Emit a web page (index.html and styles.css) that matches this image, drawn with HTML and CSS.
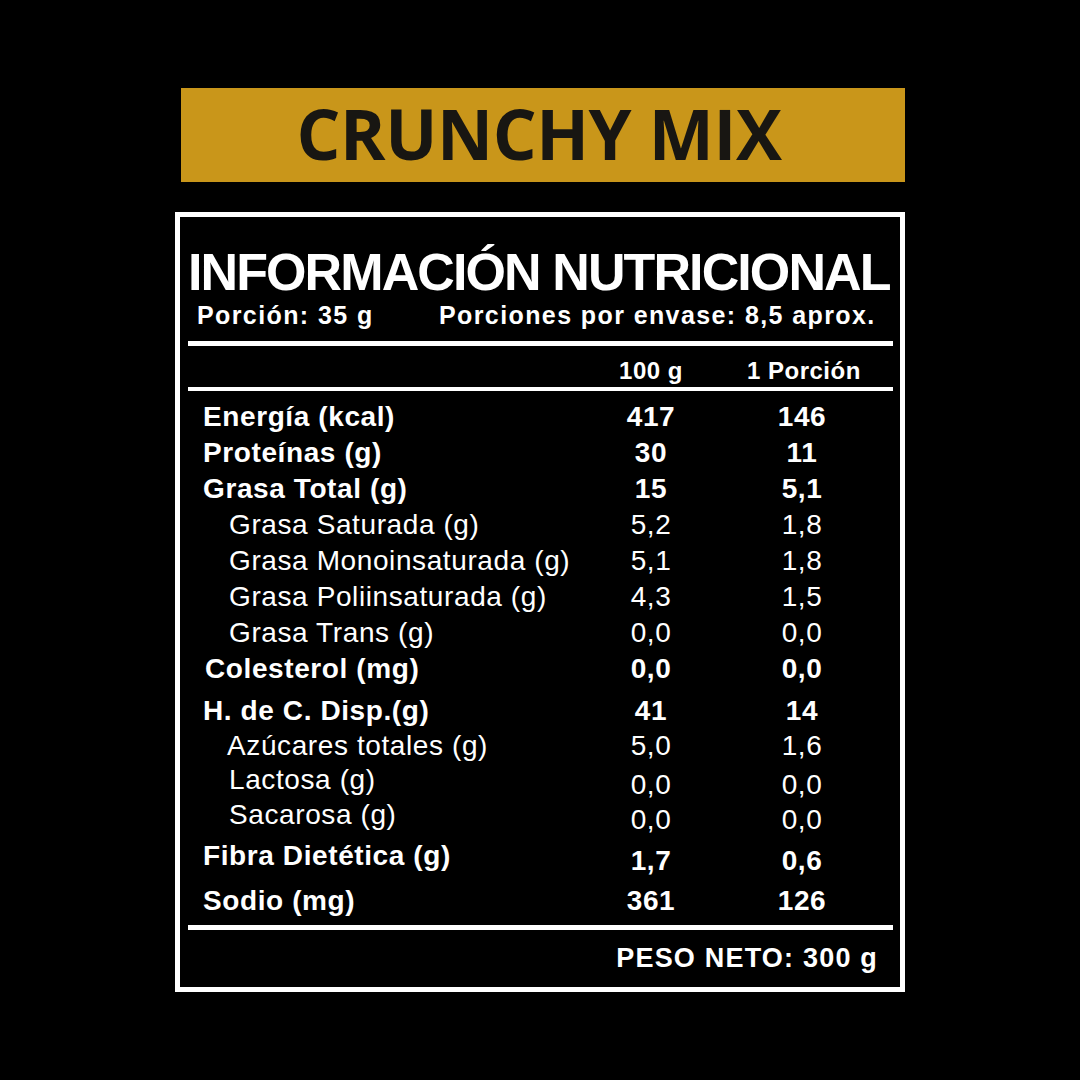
FILE: index.html
```html
<!DOCTYPE html>
<html lang="es">
<head>
<meta charset="utf-8">
<title>Crunchy Mix - Información Nutricional</title>
<link rel="stylesheet" href="styles.css">
</head>
<body>
<div class="page">
  <div class="banner"><h1 class="brand">CRUNCHY MIX</h1></div>
  <section class="label">
    <h2 class="title">INFORMACIÓN NUTRICIONAL</h2>
    <div class="serving"><span class="serving-size">Porción: 35 g</span><span>Porciones por envase: 8,5 aprox.</span></div>
    <div class="rule thick"></div>
    <div class="row head"><span></span><span class="val">100 g</span><span class="val">1 Porción</span></div>
    <div class="rule thin"></div>
    <div class="rows">
      <div class="row main"><span class="name">Energía (kcal)</span><span class="val">417</span><span class="val">146</span></div>
      <div class="row main"><span class="name">Proteínas (g)</span><span class="val">30</span><span class="val">11</span></div>
      <div class="row main"><span class="name">Grasa Total (g)</span><span class="val">15</span><span class="val">5,1</span></div>
      <div class="row sub"><span class="name">Grasa Saturada (g)</span><span class="val">5,2</span><span class="val">1,8</span></div>
      <div class="row sub"><span class="name">Grasa Monoinsaturada (g)</span><span class="val">5,1</span><span class="val">1,8</span></div>
      <div class="row sub"><span class="name">Grasa Poliinsaturada (g)</span><span class="val">4,3</span><span class="val">1,5</span></div>
      <div class="row sub"><span class="name">Grasa Trans (g)</span><span class="val">0,0</span><span class="val">0,0</span></div>
      <div class="row main"><span class="name nudge">Colesterol (mg)</span><span class="val">0,0</span><span class="val">0,0</span></div>
      <div class="row main sp-hc"><span class="name">H. de C. Disp.(g)</span><span class="val">41</span><span class="val">14</span></div>
      <div class="row sub sp-az"><span class="name tight">Azúcares totales (g)</span><span class="val">5,0</span><span class="val">1,6</span></div>
      <div class="row sub sp-la drop"><span class="name">Lactosa (g)</span><span class="val">0,0</span><span class="val">0,0</span></div>
      <div class="row sub sp-sa drop"><span class="name">Sacarosa (g)</span><span class="val">0,0</span><span class="val">0,0</span></div>
      <div class="row main sp-fi drop"><span class="name">Fibra Dietética (g)</span><span class="val">1,7</span><span class="val">0,6</span></div>
      <div class="row main sp-so"><span class="name">Sodio (mg)</span><span class="val">361</span><span class="val">126</span></div>
    </div>
    <div class="rule thick bottom"></div>
    <div class="net">PESO NETO: 300 g</div>
  </section>
</div>
</body>
</html>
```
FILE: styles.css
```css
* { box-sizing: border-box; }
html, body { margin: 0; padding: 0; background: #000; }
.page {
  width: 1080px;
  height: 1080px;
  background: #000;
  display: flex;
  flex-direction: column;
  align-items: flex-start;
  padding-top: 88px;
  font-family: "Liberation Sans", Arial, sans-serif;
  color: #fff;
}
.banner {
  margin-left: 181px;
  width: 724px;
  height: 94px;
  background: #c9961a;
  display: flex;
  align-items: center;
  justify-content: center;
  padding-right: 8px;
  padding-bottom: 4px;
}
.brand {
  margin: 0;
  font-family: "Open Sans", "Noto Sans", sans-serif;
  font-weight: 700;
  font-size: 69px;
  line-height: 70px;
  color: #181612;
  letter-spacing: -0.4px;
}
.label {
  margin-left: 175px;
  margin-top: 30px;
  width: 730px;
  border: 5px solid #fff;
  padding: 29px 7px 16px 8px;
}
.title {
  margin: 0;
  font-size: 52px;
  line-height: 52px;
  font-weight: 700;
  letter-spacing: -1.9px;
  white-space: nowrap;
}
.serving {
  margin-top: 6px;
  display: flex;
  padding-left: 9px;
  font-size: 25px;
  line-height: 23px;
  font-weight: 700;
  letter-spacing: 1.4px;
  white-space: nowrap;
}
.serving-size { width: 242px; }
.rule { background: #fff; }
.thick { height: 5px; margin-top: 14px; }
.thin { height: 4px; margin-top: 5px; }
.bottom { margin-top: 6px; }
.row {
  display: grid;
  grid-template-columns: minmax(0, 1fr) 110px 110px;
  column-gap: 41px;
  padding-right: 36px;
  white-space: nowrap;
}
.row .val { text-align: center; }
.head {
  margin-top: 13px;
  font-size: 24px;
  line-height: 23px;
  font-weight: 700;
  letter-spacing: 0.5px;
}
.rows { margin-top: 8px; }
.rows .row {
  font-size: 28px;
  line-height: 36px;
  letter-spacing: 0.6px;
}
.main { font-weight: 700; }
.sub { font-weight: 400; }
.main .name { padding-left: 15px; }
.sub .name { padding-left: 41px; }
.main .name.nudge { padding-left: 17px; }
.sub .name.tight { padding-left: 39px; }
.sp-hc { margin-top: 6px; }
.sp-az { margin-top: -1px; }
.sp-la { margin-top: -2px; }
.sp-sa { margin-top: -1px; }
.sp-fi { margin-top: 5px; }
.sp-so { margin-top: 9px; }
.drop .val { padding-top: 5px; margin-bottom: -5px; }
.net {
  margin-top: 15px;
  text-align: right;
  padding-right: 15px;
  font-size: 27px;
  line-height: 26px;
  font-weight: 700;
  letter-spacing: 1.2px;
}
```
